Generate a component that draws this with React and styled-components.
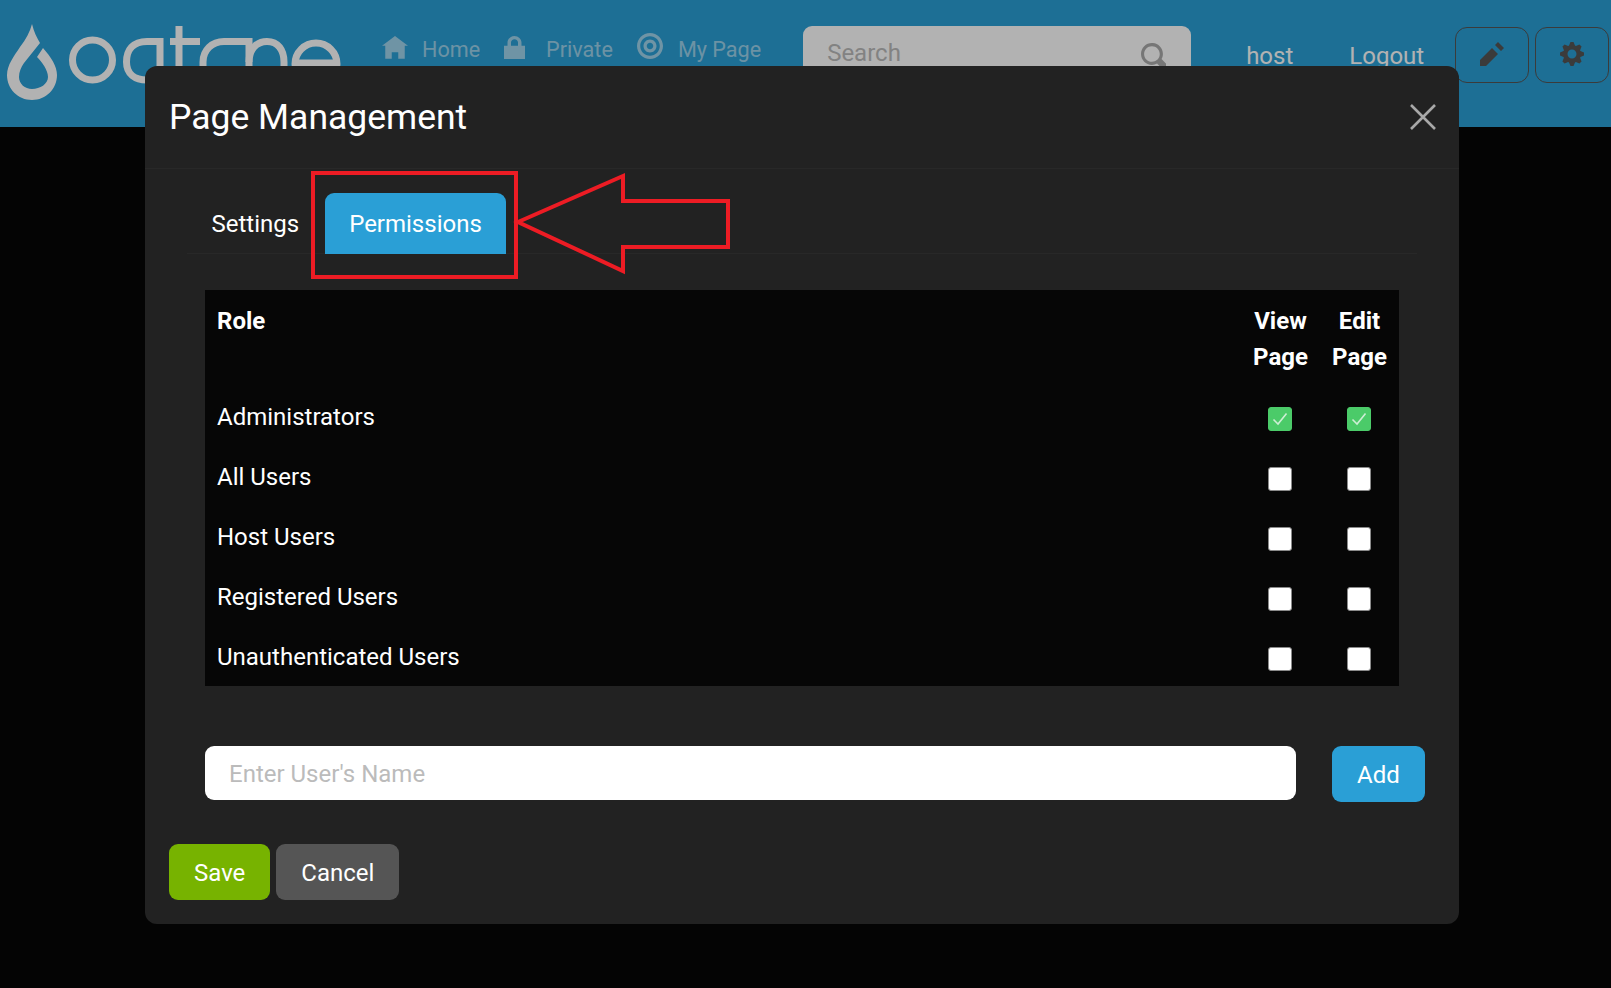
import React from 'react'
import styled, { createGlobalStyle } from 'styled-components'

const GlobalStyle = createGlobalStyle`
  html, body {
    margin: 0;
    height: 100%;
    overflow: hidden;
    background: #060606;
    font-family: Roboto, "Liberation Sans", sans-serif;
    font-size: 24px;
    color: #fff;
  }
  * {
    box-sizing: border-box;
  }
`

const Navbar = styled.header`
  display: flex;
  align-items: flex-start;
  height: 127px;
  background: #2a9fd6;
  > * {
    flex: none;
  }
`
const Logo = styled.svg`
  width: 382px;
  height: 127px;
`
const NavLink = styled.a`
  display: flex;
  align-items: center;
  height: 36px;
  margin-top: 31px;
  margin-right: ${(p) => p.$gap}px;
  color: rgba(255, 255, 255, 0.55);
  font-size: 21.6px;
  white-space: nowrap;
`
const NavIcon = styled.svg`
  width: ${(p) => p.$width || 26}px;
  height: ${(p) => p.$height || 26}px;
  margin-right: ${(p) => p.$space || 14}px;
  fill: currentColor;
  transform: translateY(${(p) => p.$lift || 0}px);
`
const SearchBox = styled.div`
  display: flex;
  align-items: center;
  justify-content: space-between;
  width: 388px;
  height: 54px;
  margin: 26px 55px 0 0;
  padding: 0 24px;
  background: #fff;
  border-radius: 9px;
  color: #bbb;
  font-size: 24px;
`
const SearchIcon = styled.svg`
  width: 25px;
  height: 25px;
  margin-right: 1px;
  margin-top: 4px;
  fill: #aaa;
`
const UserLink = styled.a`
  margin-top: 42px;
  margin-right: ${(p) => p.$gap}px;
  font-size: 24px;
  line-height: 28px;
  color: #fff;
`
const IconButton = styled.button`
  display: flex;
  align-items: center;
  justify-content: center;
  width: 74px;
  height: 56px;
  margin-top: 27px;
  margin-right: 6px;
  padding: 0 0 2px;
  background: transparent;
  border: 1.5px solid #555;
  border-radius: 12px;
  color: #555;
  svg {
    width: 24px;
    height: 24px;
    fill: currentColor;
  }
`
const Backdrop = styled.div`
  position: fixed;
  inset: 0;
  background: rgba(0, 0, 0, 0.3);
`
const Modal = styled.section`
  position: absolute;
  left: 145px;
  top: 66px;
  width: 1314px;
  height: 858px;
  background: #222;
  border-radius: 12px;
`
const ModalHeader = styled.div`
  display: flex;
  align-items: center;
  justify-content: space-between;
  height: 103px;
  padding: 0 23px 0 24px;
  border-bottom: 1px solid #282828;
`
const ModalTitle = styled.h5`
  margin: 0;
  font-size: 35.5px;
  font-weight: 400;
  line-height: 44px;
`
const CloseIcon = styled.svg`
  width: 26px;
  height: 26px;
  stroke: #a8a8a8;
  stroke-width: 2.6;
`
const Tabs = styled.nav`
  display: flex;
  gap: 1px;
  height: 61px;
  margin: 24px 42px 0;
  border-bottom: 1px solid #282828;
`
const Tab = styled.a`
  display: flex;
  align-items: center;
  height: 61px;
  padding: 0 24.5px;
  border-radius: 9px 9px 0 0;
  background: ${(p) => (p.$active ? '#2a9fd6' : 'transparent')};
  color: #fff;
`
const RoleTable = styled.table`
  width: 1194px;
  margin: 36px 0 0 60px;
  border-collapse: collapse;
  background: #060606;
  line-height: 36px;
`
const HeadCell = styled.th`
  padding: 13px 12px 11px;
  vertical-align: top;
  text-align: ${(p) => (p.$center ? 'center' : 'left')};
  width: ${(p) => (p.$center ? '79px' : 'auto')};
  font-weight: 700;
`
const Cell = styled.td`
  height: 60px;
  padding: ${(p) => (p.$center ? '11px 12px 13px' : '13px 12px 11px')};
  text-align: ${(p) => (p.$center ? 'center' : 'left')};
`
const CheckBox = styled.span`
  display: inline-flex;
  align-items: center;
  justify-content: center;
  width: 24px;
  height: 24px;
  margin: 4px 1px 0 0;
  vertical-align: middle;
  border-radius: 3px;
  background: ${(p) => (p.$checked ? '#4bcb69' : '#fff')};
  border: 1px solid ${(p) => (p.$checked ? '#4bcb69' : '#8a8a8a')};
  svg {
    width: 18px;
    height: 18px;
    fill: none;
    stroke: #cdeed4;
    stroke-width: 1.6;
  }
`
const AddRow = styled.div`
  display: flex;
  align-items: flex-start;
  gap: 36px;
  margin: 60px 0 0 60px;
`
const NameInput = styled.input`
  width: 1091px;
  height: 54px;
  padding: 2px 24px 0;
  border: 0;
  border-radius: 9px;
  background: #fff;
  font: inherit;
  color: #222;
  &::placeholder {
    color: #bbb;
    opacity: 1;
  }
`
const Button = styled.button`
  height: 56px;
  padding: 2px 25px 0;
  border: 0;
  border-radius: 9px;
  background: ${(p) => p.$bg};
  color: #fff;
  font: inherit;
`
const Footer = styled.div`
  display: flex;
  gap: 6px;
  margin: 42px 0 0 24px;
`
const Annotation = styled.svg`
  position: absolute;
  left: 0;
  top: 0;
  width: 1611px;
  height: 988px;
  pointer-events: none;
  fill: none;
  stroke: #ed1c24;
  stroke-width: 4;
`

const icons = {
  home: 'M4 0l-4 3h1v4h2v-2h2v2h2v-4.03l1 .03-4-3z',
  lock: 'M3 0c-1.1 0-2 .9-2 2v1h-1v4h6v-4h-1v-1c0-1.1-.9-2-2-2zm0 1c.56 0 1 .44 1 1v1h-2v-1c0-.56.44-1 1-1z',
  target:
    'M4 0c-2.2 0-4 1.8-4 4s1.8 4 4 4 4-1.8 4-4-1.8-4-4-4zm0 1c1.66 0 3 1.34 3 3s-1.34 3-3 3-3-1.34-3-3 1.34-3 3-3zm0 1c-1.1 0-2 .9-2 2s.9 2 2 2 2-.9 2-2-.9-2-2-2zm0 1c.56 0 1 .44 1 1s-.44 1-1 1-1-.44-1-1 .44-1 1-1z',
  pencil: 'M6 0l-1 1 2 2 1-1-2-2zm-2 2l-4 4v2h2l4-4-2-2z',
  cog: 'M3.5 0l-.5 1.19c-.1.03-.19.08-.28.13l-1.19-.5-.72.72.5 1.19c-.05.1-.09.18-.13.28l-1.19.5v1l1.19.5c.04.1.08.18.13.28l-.5 1.19.72.72 1.19-.5c.09.04.18.09.28.13l.5 1.19h1l.5-1.19c.09-.04.19-.08.28-.13l1.19.5.72-.72-.5-1.19c.04-.09.09-.19.13-.28l1.19-.5v-1l-1.19-.5c-.03-.09-.08-.19-.13-.28l.5-1.19-.72-.72-1.19.5c-.09-.04-.19-.09-.28-.13l-.5-1.19h-1zm.5 2.5c.83 0 1.5.67 1.5 1.5s-.67 1.5-1.5 1.5-1.5-.67-1.5-1.5.67-1.5 1.5-1.5z',
  search:
    'M3.5 0c-1.93 0-3.5 1.57-3.5 3.5s1.57 3.5 3.5 3.5c.59 0 1.17-.14 1.66-.41a1 1 0 0 0 .13.13l1 1a1.02 1.02 0 1 0 1.44-1.44l-1-1a1 1 0 0 0-.16-.13c.27-.49.44-1.06.44-1.66 0-1.93-1.57-3.5-3.5-3.5zm0 1c1.39 0 2.5 1.11 2.5 2.5 0 .66-.24 1.27-.66 1.72-.01.01-.02.02-.03.03a1 1 0 0 0-.13.13c-.44.4-1.04.63-1.69.63-1.39 0-2.5-1.11-2.5-2.5s1.11-2.5 2.5-2.5z',
}

const roles = [
  { name: 'Administrators', checked: true },
  { name: 'All Users' },
  { name: 'Host Users' },
  { name: 'Registered Users' },
  { name: 'Unauthenticated Users' },
]

function OqtaneLogo() {
  return (
    <Logo viewBox="0 0 382 127">
      <path
        fill="#fff"
        d="M32 24 C34 32 37 38 40 43 L24 63 C21 67 19 72 19 77 C19 84 25 89 32 89 C40 89 48 84 48 77 C48 70 42 62 37 57 L43 48 C51 57 57 66 57 75 C57 89 46 100 32 100 C18 100 7 89 7 75 C7 65 14 56 20 47 C26 39 30 32 32 24 Z"
      />
      <g fill="none" stroke="#fff" strokeWidth="7">
        <circle cx="92.5" cy="60" r="20" />
        <path d="M160 100 V41.5 H147 C133 41.5 126.5 50 126.5 62 C126.5 74 135 80 147 80" />
        <path d="M179 26 V100 M170 41.5 H200" />
        <path d="M203 100 V62 C203 50 212 41.5 224 41.5 H249 V100" />
        <path d="M249 62 C249 50 256 41.5 267 41.5 C278 41.5 284 50 284 62 V100" />
        <circle cx="316" cy="64" r="21" />
        <path d="M295 63 H340" />
      </g>
    </Logo>
  )
}

function App() {
  return (
    <>
      <GlobalStyle />
      <Navbar>
        <OqtaneLogo />
        <NavLink $gap={24}>
          <NavIcon viewBox="0 0 8 8">
            <path d={icons.home} />
          </NavIcon>
          Home
        </NavLink>
        <NavLink $gap={24}>
          <NavIcon viewBox="0 0 6 7" preserveAspectRatio="none" $width={21} $height={23} $space={21} $lift={-2}>
            <path d={icons.lock} />
          </NavIcon>
          Private
        </NavLink>
        <NavLink $gap={42}>
          <NavIcon viewBox="0 0 8 8" $space={15} $lift={-3}>
            <path d={icons.target} />
          </NavIcon>
          My Page
        </NavLink>
        <SearchBox>
          Search
          <SearchIcon viewBox="0 0 8 8">
            <path d={icons.search} />
          </SearchIcon>
        </SearchBox>
        <UserLink $gap={56}>host</UserLink>
        <UserLink $gap={31}>Logout</UserLink>
        <IconButton>
          <svg viewBox="0 0 8 8">
            <path d={icons.pencil} />
          </svg>
        </IconButton>
        <IconButton>
          <svg viewBox="0 0 8 8">
            <path d={icons.cog} />
          </svg>
        </IconButton>
      </Navbar>
      <Backdrop />
      <Modal>
        <ModalHeader>
          <ModalTitle>Page Management</ModalTitle>
          <CloseIcon viewBox="0 0 26 26">
            <path d="M1 1 L25 25 M25 1 L1 25" />
          </CloseIcon>
        </ModalHeader>
        <Tabs>
          <Tab>Settings</Tab>
          <Tab $active>Permissions</Tab>
        </Tabs>
        <RoleTable>
          <thead>
            <tr>
              <HeadCell>Role</HeadCell>
              <HeadCell $center>View Page</HeadCell>
              <HeadCell $center>Edit Page</HeadCell>
            </tr>
          </thead>
          <tbody>
            {roles.map((role) => (
              <tr key={role.name}>
                <Cell>{role.name}</Cell>
                {[0, 1].map((col) => (
                  <Cell $center key={col}>
                    <CheckBox $checked={role.checked}>
                      {role.checked && (
                        <svg viewBox="0 0 18 18">
                          <path d="M2.5 9.5 L7 14 L15.5 3.5" />
                        </svg>
                      )}
                    </CheckBox>
                  </Cell>
                ))}
              </tr>
            ))}
          </tbody>
        </RoleTable>
        <AddRow>
          <NameInput placeholder="Enter User's Name" />
          <Button $bg="#2a9fd6">Add</Button>
        </AddRow>
        <Footer>
          <Button $bg="#77b300">Save</Button>
          <Button $bg="#555">Cancel</Button>
        </Footer>
      </Modal>
      <Annotation viewBox="0 0 1611 988">
        <rect x="313" y="173" width="203" height="104" />
        <path d="M518 222 L623 176 V201 H728 V247 H623 L623 271 Z" />
      </Annotation>
    </>
  )
}

export default App
